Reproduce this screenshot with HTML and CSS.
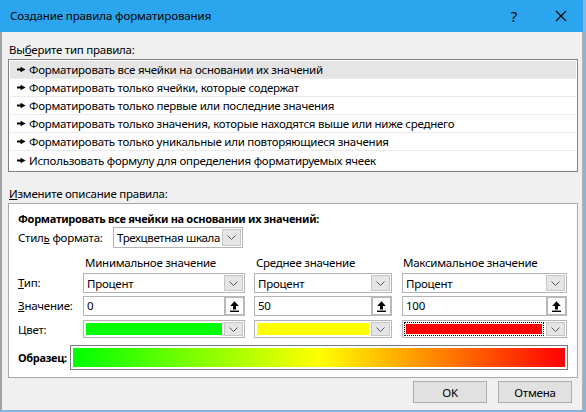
FILE: index.html
```html
<!DOCTYPE html>
<html lang="ru">
<head>
<meta charset="utf-8">
<title>Создание правила форматирования</title>
<link rel="stylesheet" href="styles.css">
</head>
<body>
<div class="dialog">
  <div class="titlebar">
    <span class="title">Создание правила форматирования</span>
    <span class="help">?</span>
    <span class="close"><svg width="12" height="12" viewBox="0 0 12 12"><path d="M1 1L11 11M11 1L1 11" stroke="#000" stroke-width="1.1" fill="none"/></svg></span>
  </div>
  <div class="body">
    <div class="caption">Вы<u>б</u>ерите тип правила:</div>
    <ul class="rulelist">
      <li class="sel"><svg class="arrow" width="9" height="7" viewBox="0 0 9 7"><path d="M0 2.5H3.6V0.8L8.6 3.5 3.6 6.2V4.5H0Z" fill="#000"/></svg>Форматировать все ячейки на основании их значений</li>
      <li><svg class="arrow" width="9" height="7" viewBox="0 0 9 7"><path d="M0 2.5H3.6V0.8L8.6 3.5 3.6 6.2V4.5H0Z" fill="#000"/></svg>Форматировать только ячейки, которые содержат</li>
      <li><svg class="arrow" width="9" height="7" viewBox="0 0 9 7"><path d="M0 2.5H3.6V0.8L8.6 3.5 3.6 6.2V4.5H0Z" fill="#000"/></svg>Форматировать только первые или последние значения</li>
      <li><svg class="arrow" width="9" height="7" viewBox="0 0 9 7"><path d="M0 2.5H3.6V0.8L8.6 3.5 3.6 6.2V4.5H0Z" fill="#000"/></svg>Форматировать только значения, которые находятся выше или ниже среднего</li>
      <li><svg class="arrow" width="9" height="7" viewBox="0 0 9 7"><path d="M0 2.5H3.6V0.8L8.6 3.5 3.6 6.2V4.5H0Z" fill="#000"/></svg>Форматировать только уникальные или повторяющиеся значения</li>
      <li><svg class="arrow" width="9" height="7" viewBox="0 0 9 7"><path d="M0 2.5H3.6V0.8L8.6 3.5 3.6 6.2V4.5H0Z" fill="#000"/></svg>Использовать формулу для определения форматируемых ячеек</li>
    </ul>
    <div class="caption caption2"><u>И</u>змените описание правила:</div>
    <div class="group">
      <div class="group-title">Форматировать все ячейки на основании их значений:</div>
      <div class="style-row">
        <span class="style-label">Стил<u>ь</u> формата:</span>
        <div class="combo style-combo">
          <span class="combo-text">Трехцветная шкала</span>
          <span class="dd"><svg width="9" height="5" viewBox="0 0 9 5"><path d="M0.5 0.5L4.5 4.5 8.5 0.5" fill="none" stroke="#5a5a5a"/></svg></span>
        </div>
      </div>
      <div class="grid">
        <span></span>
        <span class="colhead">Минимальное значение</span>
        <span class="colhead">Среднее значение</span>
        <span class="colhead colhead-max">Максимальное значение</span>

        <span class="rowlabel"><u>Т</u>ип:</span>
        <div class="combo w-min"><span class="combo-text">Процент</span><span class="dd"><svg width="9" height="5" viewBox="0 0 9 5"><path d="M0.5 0.5L4.5 4.5 8.5 0.5" fill="none" stroke="#5a5a5a"/></svg></span></div>
        <div class="combo w-mid"><span class="combo-text">Процент</span><span class="dd"><svg width="9" height="5" viewBox="0 0 9 5"><path d="M0.5 0.5L4.5 4.5 8.5 0.5" fill="none" stroke="#5a5a5a"/></svg></span></div>
        <div class="combo w-max"><span class="combo-text">Процент</span><span class="dd"><svg width="9" height="5" viewBox="0 0 9 5"><path d="M0.5 0.5L4.5 4.5 8.5 0.5" fill="none" stroke="#5a5a5a"/></svg></span></div>

        <span class="rowlabel"><u>З</u>начение:</span>
        <div class="input w-min"><span class="input-text">0</span><span class="pick"><svg width="9" height="11" viewBox="0 0 9 11"><path d="M4.5 0.3L8.8 5H6V8.4H3V5H0.2Z" fill="#000"/><rect x="0" y="9.6" width="9" height="1.4" fill="#000"/></svg></span></div>
        <div class="input w-mid"><span class="input-text">50</span><span class="pick"><svg width="9" height="11" viewBox="0 0 9 11"><path d="M4.5 0.3L8.8 5H6V8.4H3V5H0.2Z" fill="#000"/><rect x="0" y="9.6" width="9" height="1.4" fill="#000"/></svg></span></div>
        <div class="input w-max"><span class="input-text">100</span><span class="pick"><svg width="9" height="11" viewBox="0 0 9 11"><path d="M4.5 0.3L8.8 5H6V8.4H3V5H0.2Z" fill="#000"/><rect x="0" y="9.6" width="9" height="1.4" fill="#000"/></svg></span></div>

        <span class="rowlabel">Цвет:</span>
        <div class="color w-min"><span class="swatch green"></span><span class="dd"><svg width="9" height="5" viewBox="0 0 9 5"><path d="M0.5 0.5L4.5 4.5 8.5 0.5" fill="none" stroke="#5a5a5a"/></svg></span></div>
        <div class="color w-mid"><span class="swatch yellow"></span><span class="dd"><svg width="9" height="5" viewBox="0 0 9 5"><path d="M0.5 0.5L4.5 4.5 8.5 0.5" fill="none" stroke="#5a5a5a"/></svg></span></div>
        <div class="color w-max"><span class="focus"><span class="swatch red"></span></span><span class="dd"><svg width="9" height="5" viewBox="0 0 9 5"><path d="M0.5 0.5L4.5 4.5 8.5 0.5" fill="none" stroke="#5a5a5a"/></svg></span></div>
      </div>
      <div class="sample-row">
        <span class="sample-label">Образец:</span>
        <div class="sample-box"><div class="sample-grad"></div></div>
      </div>
    </div>
    <div class="buttons">
      <button class="btn">OK</button>
      <button class="btn">Отмена</button>
    </div>
  </div>
</div>
</body>
</html>
```
FILE: styles.css
```css
* { box-sizing: border-box; }
html, body { margin: 0; padding: 0; }
body {
  background: #86b4dc;
  font-family: "Noto Sans", "Open Sans", sans-serif;
  font-size: 11.5px;
  letter-spacing: -0.25px;
  color: #000;
  width: 586px;
  height: 412px;
  overflow: hidden;
}
u { text-decoration: underline; text-underline-offset: 1px; }

.dialog {
  width: 583px;
  height: 410px;
  display: flex;
  flex-direction: column;
  background: #f0f0f0;
}
.titlebar {
  height: 32px;
  flex: none;
  background: #2ba6ee;
  display: flex;
  align-items: center;
  padding-left: 10px;
}
.title { flex: 1; font-size: 11.5px; letter-spacing: -0.1px; line-height: 16px; }
.help { font-size: 15px; letter-spacing: 0; width: 14px; text-align: center; margin-right: 34px; line-height: 16px; }
.close { width: 12px; height: 12px; display: flex; margin-right: 16px; }

.body {
  flex: 1;
  border-left: 2px solid #a3a3a3;
  border-right: 1px solid #b5b5b5;
  padding: 10px 4px 0 6px;
  display: flex;
  flex-direction: column;
}
.caption { line-height: 16px; padding-left: 1px; margin-bottom: 1px; }
.caption2 { margin-top: 14px; }

.rulelist {
  list-style: none;
  margin: 0;
  padding: 1px;
  border: 1px solid #828282;
  background: #fff;
  height: 113px;
}
.rulelist li {
  height: 18px;
  line-height: 17px;
  border-bottom: 1px solid #ebebeb;
  display: flex;
  align-items: center;
  padding-left: 7px;
  white-space: nowrap;
}
.rulelist li:last-child { border-bottom: none; }
.rulelist li.sel { background: #e5e5e5; }
.arrow { margin-right: 3px; flex: none; }

.group {
  border: 1px solid #a9a9a9;
  background: #fff;
  padding: 7px 0 7px 9px;
}
.group-title { font-weight: bold; font-size: 11px; letter-spacing: -0.3px; line-height: 16px; }
.style-row { display: flex; align-items: center; height: 21px; }
.style-label { width: 95px; white-space: nowrap; }

.combo, .input, .color {
  display: flex;
  align-items: stretch;
  border: 1px solid #b4b4b4;
  background: #fff;
  padding: 1px;
}
.style-combo { width: 130px; height: 21px; }
.combo-text { flex: 1; padding-left: 2px; line-height: 17px; white-space: nowrap; }
.style-combo .combo-text { padding-left: 2px; letter-spacing: -0.35px; }
.dd {
  width: 19px;
  flex: none;
  background: #e5e5e5;
  border: 1px solid #c6c6c6;
  display: flex;
  align-items: center;
  justify-content: center;
}

.grid {
  margin-top: 7px;
  display: grid;
  grid-template-columns: 65px 171px 148px 165px;
  grid-template-rows: 18px 23px 24px 18px;
  align-items: start;
}
.colhead { line-height: 16px; padding-left: 2px; white-space: nowrap; }
.colhead-max { padding-left: 1px; }
.rowlabel { line-height: 20px; white-space: nowrap; }
.w-min { width: 162px; }
.w-mid { width: 138px; }
.w-max { width: 165px; }
.combo.w-min, .combo.w-mid, .combo.w-max { height: 20px; }
.input { height: 20px; padding: 0; }
.input-text { flex: 1; padding-left: 3px; line-height: 18px; }
.pick {
  width: 21px;
  flex: none;
  border: 2px solid #b8b8b8;
  background: #fdfdfd;
  display: flex;
  align-items: center;
  justify-content: center;
  margin: -1px -1px -1px 0;
}
.color { height: 18px; }
.swatch { flex: 1; margin: 1px 2px 1px 1px; }
.green { background: #00ff00; }
.yellow { background: #ffff00; }
.red { background: #ff0000; margin: 1px; }
.focus { flex: 1; display: flex; border: 1px dotted #000; margin-right: 2px; }

.sample-row { display: flex; align-items: center; margin-top: 7px; height: 25px; }
.sample-label { font-weight: bold; font-size: 11px; letter-spacing: -0.3px; width: 52px; white-space: nowrap; }
.sample-box {
  width: 498px;
  height: 25px;
  border: 1px solid #7a7a7a;
  padding: 2px;
  background: #fff;
}
.sample-grad {
  height: 100%;
  background: linear-gradient(to right, #00ff00 0%, #ffff00 50%, #ff0000 100%);
}

.buttons {
  display: flex;
  justify-content: flex-end;
  gap: 11px;
  margin-top: 3px;
  padding-right: 6px;
}
.btn {
  width: 74px;
  height: 22px;
  background: #e1e1e1;
  border: 1px solid #adadad;
  font-family: inherit;
  font-size: 11.5px;
  letter-spacing: -0.2px;
  color: #000;
  padding: 0;
}
```
